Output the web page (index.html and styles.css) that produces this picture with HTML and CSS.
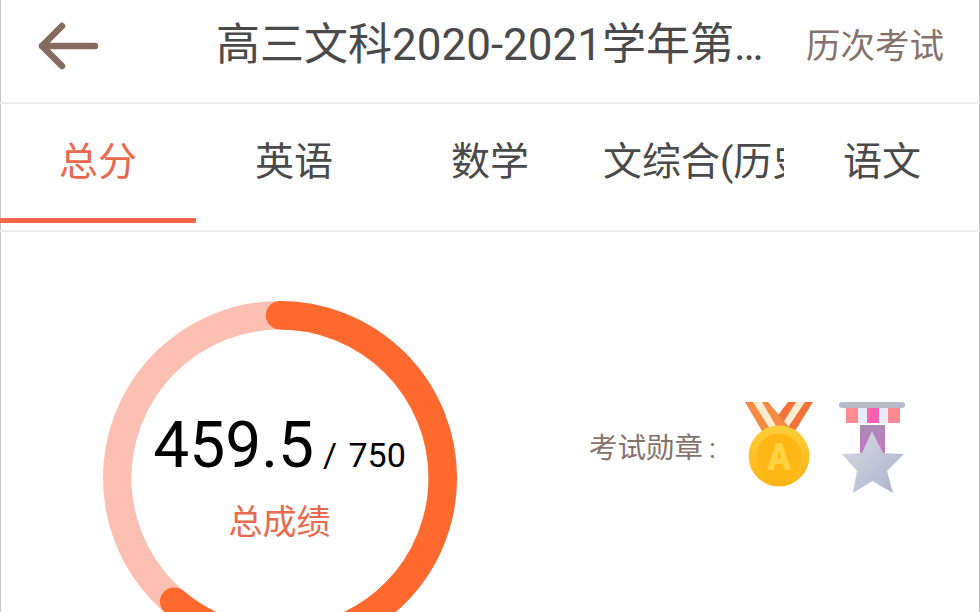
FILE: index.html
```html
<!DOCTYPE html>
<html lang="zh-CN">
<head>
    <meta charset="UTF-8">
    <title>成绩</title>
    <link rel="stylesheet" href="styles.css">
</head>
<body>
    <div class="page">
        <div class="header">
            <div class="back">
                <svg width="64" height="54" viewBox="0 0 64 54">
                    <path d="M7 27H60M27 7L7 27L27 47" fill="none" stroke="#86695f" stroke-width="6.500" stroke-linecap="round" stroke-linejoin="round"/>
                </svg>
            </div>
            <div class="title">高三文科2020-2021学年第…</div>
            <div class="history">历次考试</div>
        </div>
        <div class="tabs">
            <div class="tab active">总分</div>
            <div class="tab">英语</div>
            <div class="tab">数学</div>
            <div class="tab">文综合(历史</div>
            <div class="tab">语文</div>
        </div>
        <div class="content">
            <div class="ring">
                <svg class="ring-svg" width="354" height="354" viewBox="0 0 354 354">
                    <circle cx="177" cy="177" r="162.750" fill="none" stroke="#fcc0b3" stroke-width="28.500"/>
                    <circle cx="177" cy="177" r="162.750" fill="none" stroke="#ff692e" stroke-width="28.500" stroke-linecap="round" pathLength="750" stroke-dasharray="459.5 750" transform="rotate(-90 177 177)"/>
                </svg>
                <div class="score">
                    <div class="score-line"><span class="score-num">459.5</span><span class="score-total">/ 750</span></div>
                    <div class="score-label">总成绩</div>
                </div>
            </div>
            <div class="medals">
                <span class="medals-label">考试勋章<span class="colon">:</span></span>
                <svg class="medal" width="68" height="88" viewBox="0 0 68 88">
                    <defs>
                        <linearGradient id="gold" x1="0" y1="0" x2="0" y2="1">
                            <stop offset="0" stop-color="#ffcf3a"/>
                            <stop offset="1" stop-color="#fdb414"/>
                        </linearGradient>
                    </defs>
                    <path d="M68 1H43L24 26L50 30Z" fill="#f4713a"/>
                    <path d="M60 1H51L36 25L42 28Z" fill="#fdeccf"/>
                    <path d="M0 1H23L44 26L17 30Z" fill="#f58a42"/>
                    <path d="M8 1H17L31 25L25 28Z" fill="#fdeccf"/>
                    <circle cx="34" cy="55" r="30.500" fill="url(#gold)"/>
                    <circle cx="34" cy="55" r="22.500" fill="#ffb716"/>
                    <path d="M22 69L31 42H37L46 69H39.500L37.800 63H30.200L28.500 69ZM31.800 57.500H36.200L34 50Z" fill="#ffd23f" fill-rule="evenodd"/>
                </svg>
                <svg class="medal" width="68" height="94" viewBox="0 0 68 94">
                    <defs>
                        <linearGradient id="silver" x1="0" y1="0" x2="1" y2="1">
                            <stop offset="0" stop-color="#d9dbe3"/>
                            <stop offset="1" stop-color="#aab3ca"/>
                        </linearGradient>
                        <linearGradient id="strip" x1="0" y1="0" x2="0" y2="1">
                            <stop offset="0" stop-color="#a88bb0"/>
                            <stop offset="1" stop-color="#c874c8"/>
                        </linearGradient>
                    </defs>
                    <rect x="1" y="1" width="66" height="6" rx="3" fill="#b8bcc8"/>
                    <rect x="8" y="7" width="54" height="15" fill="#ff8a90"/>
                    <rect x="20" y="7" width="9" height="15" fill="#e6edf6"/>
                    <rect x="29" y="7" width="12" height="15" fill="#ff60b0"/>
                    <rect x="41" y="7" width="9" height="15" fill="#e6edf6"/>
                    <rect x="22" y="24" width="25" height="28" fill="url(#strip)"/>
                    <path d="M34 30L45 52L66 53L49 70L55 92L34.500 80L15 92L19 70L4 53L24 52Z" fill="url(#silver)"/>
                </svg>
            </div>
        </div>
    </div>
</body>
</html>
```

FILE: styles.css
```css
html, body {
    margin: 0;
    padding: 0;
    height: 612px;
    overflow: hidden;
    background-color: #fff;
}
body {
    font-family: Roboto, "Noto Sans CJK SC", sans-serif;
}
.page {
    height: 612px;
    overflow: hidden;
    box-shadow: inset 1px 0 #c4c4c4, inset -1px 0 #c4c4c4;
}
.header {
    display: flex;
    align-items: center;
    height: 92px;
    padding-bottom: 10px;
    border-bottom: 2px solid #ebebeb;
}
.back {
    display: flex;
    width: 216px;
    padding-left: 35px;
    box-sizing: border-box;
    flex-shrink: 0;
}
.title {
    width: 590px;
    flex-shrink: 0;
    margin-top: -2px;
    font-size: 44px;
    line-height: 60px;
    color: #4a4a4a;
    white-space: nowrap;
}
.history {
    font-size: 34.500px;
    line-height: 48px;
    color: #86726c;
    white-space: nowrap;
}
.tabs {
    display: flex;
    height: 126px;
    border-bottom: 2px solid #ebebeb;
}
.tab {
    width: 196px;
    flex-shrink: 0;
    box-sizing: border-box;
    padding: 0 15px 8px;
    line-height: 116px;
    font-size: 39px;
    color: #4a4a4a;
    text-align: center;
    white-space: nowrap;
    overflow: hidden;
}
.tab.active {
    color: #e8694e;
    border-bottom: 5px solid #f4674b;
    height: 119px;
    padding-bottom: 0;
}
.content {
    display: flex;
    align-items: flex-start;
    padding: 69px 0 0 102.500px;
}
.ring {
    display: grid;
    width: 354px;
    height: 354px;
    flex-shrink: 0;
}
.ring-svg, .score {
    grid-area: 1 / 1;
}
.score {
    padding-top: 105px;
    text-align: center;
}
.score-line {
    color: #000;
    line-height: 80px;
    white-space: nowrap;
}
.score-num {
    font-size: 64px;
}
.score-total {
    margin-left: 9px;
    font-size: 34px;
    word-spacing: 3px;
}
.score-label {
    margin-top: -7px;
    font-size: 34px;
    color: #e8694e;
}
.medals {
    display: flex;
    align-items: flex-start;
    margin-left: 132.500px;
    margin-top: 100px;
}
.medals-label {
    margin-top: 24px;
    width: 156px;
    font-size: 28.500px;
    color: #86726c;
    white-space: nowrap;
}
.colon {
    margin-left: 6px;
}
.medal {
    flex-shrink: 0;
    margin-right: 25px;
}
```
